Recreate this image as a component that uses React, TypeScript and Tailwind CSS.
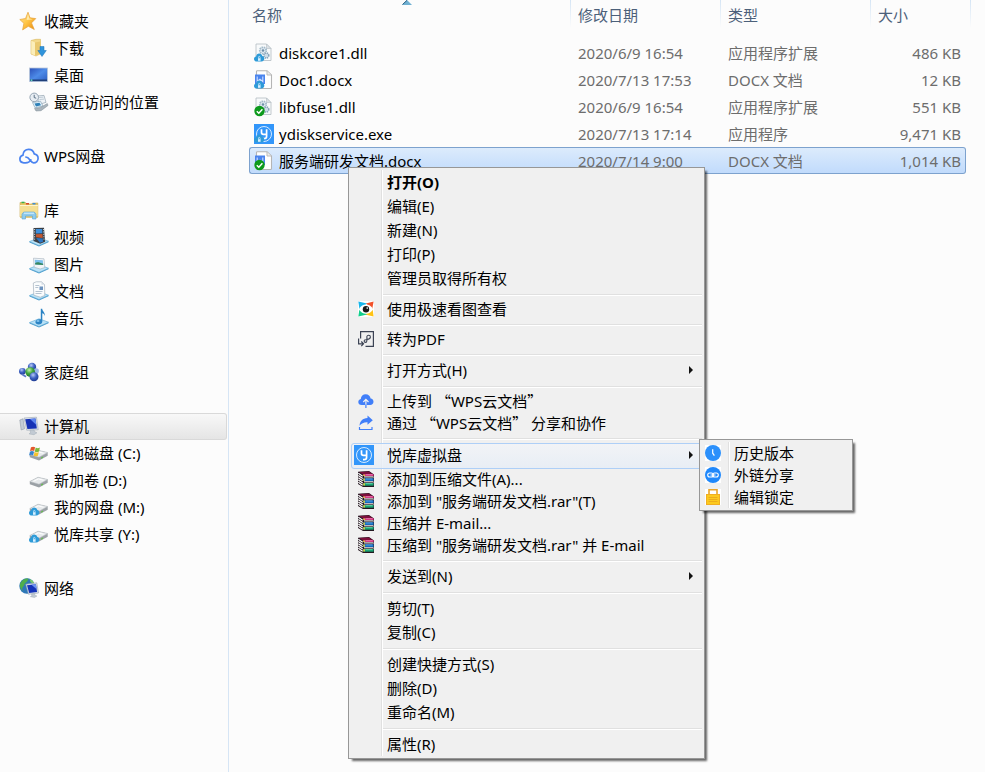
import type { ReactNode } from 'react';

type IconProps = { className?: string };

/* ---------- small overlay marks ---------- */

function CloudMark() {
  return (
    <g>
      <path d="M3 18.5C.9 18.5 0 17.2 0 15.9c0-1.4 1-2.3 2.1-2.5C2.3 11.500 3.600 10.500 5.200 10.500c1.700 0 2.800 1 3.100 2.500 1.200.2 2 1.200 2 2.600 0 1.700-1 2.900-2.800 2.900z" fill="#2e9bd8" />
      <path d="M4 15.200h2.600v2.600H4z" fill="#d8efff" />
      <path d="M4.500 15.200v-1a.8.8 0 0 1 1.600 0v1" stroke="#d8efff" strokeWidth=".7" fill="none" />
    </g>
  );
}

function CheckMark() {
  return (
    <g>
      <circle cx="5.500" cy="14" r="5.200" fill="#0d9a1c" />
      <path d="M2.800 14.200l2 2 3.600-3.900" stroke="#fff" strokeWidth="1.500" fill="none" />
    </g>
  );
}

/* ---------- sidebar icons ---------- */

function StarIcon() {
  return (
    <svg viewBox="0 0 20 20" className="size-5">
      <defs>
        <linearGradient id="star" x1="0" y1="0" x2="1" y2="1">
          <stop offset="0" stopColor="#ffe9a0" />
          <stop offset=".5" stopColor="#ffc545" />
          <stop offset="1" stopColor="#e8860c" />
        </linearGradient>
      </defs>
      <path d="M9 1.200l2 5.600 5.800.8-4.300 4.300 2.800 6.600-6-3.200-5.700 3.600 1.300-6.600L.8 8.500l5.700-1z" fill="url(#star)" stroke="#e6a23a" strokeWidth=".7" />
      <path d="M9 3l1.200 4.600 3.600.7-6.200.6z" fill="#fff3c4" opacity=".8" />
    </svg>
  );
}

function DownloadsIcon() {
  return (
    <svg viewBox="0 0 20 20" className="size-5">
      <path d="M2 2.500l5-1.200h4.500v14.500L7 18l-5-2z" fill="#f3d98b" stroke="#d9b75a" strokeWidth=".6" />
      <path d="M2.300 2.800L6 4.500v13L2.300 15.800z" fill="#fbeeb9" />
      <path d="M6 4.500l5.500-1V16L6 17.500z" fill="#e9c86e" />
      <path d="M11 8.500h4v4h2.300L13 18.500 8.800 12.500H11z" fill="#2f94dc" stroke="#1b72b5" strokeWidth=".5" />
    </svg>
  );
}

function DesktopIcon() {
  return (
    <svg viewBox="0 0 20 20" className="size-5">
      <defs>
        <linearGradient id="desk" x1="0" y1="0" x2="1" y2="1">
          <stop offset="0" stopColor="#2a4fb8" />
          <stop offset=".5" stopColor="#4d8be8" />
          <stop offset="1" stopColor="#2b5cc0" />
        </linearGradient>
      </defs>
      <rect x=".5" y="3" width="18" height="13.500" fill="url(#desk)" stroke="#b9c6d9" strokeWidth=".8" />
      <rect x="1" y="14.500" width="17" height="1.600" fill="#1f3f78" />
      <circle cx="2.500" cy="15.300" r="1" fill="#62d0c0" />
    </svg>
  );
}

function RecentIcon() {
  return (
    <svg viewBox="0 0 20 20" className="size-5">
      <path d="M8 4l7-.6 2 7-7 2z" fill="#eef3f7" stroke="#94a3b0" strokeWidth=".7" />
      <path d="M10 5.500l4.500-.4M10.500 7.500l4.500-.4" stroke="#a9b8c4" strokeWidth=".7" />
      <circle cx="5.200" cy="5.400" r="4.300" fill="#e7edf3" stroke="#8b9cab" strokeWidth=".9" />
      <path d="M5.200 2.800v2.800l2 .6" stroke="#4c6378" strokeWidth=".9" fill="none" />
      <path d="M3.500 10.500l8-1.300 2.500 4.800-8 1.800z" fill="#e2f2fb" stroke="#8ba5b7" strokeWidth=".7" />
      <path d="M5.500 11.500l5-.8 1.500 2.500-5 1.200z" fill="#2e80b7" />
      <path d="M5.500 16.500l6-1 6.800-4 .7 2-7 5.200-5 .3z" fill="#a9b4bc" stroke="#7d8b95" strokeWidth=".5" />
    </svg>
  );
}

function WpsCloudIcon() {
  return (
    <svg viewBox="0 0 20 20" className="size-5" fill="none" stroke="#4a83f0" strokeWidth="1.700" strokeLinecap="round">
      <path d="M11.800 13.800c-1 2-2.500 3-5.300 3H4.800C2.500 16.800.9 15.200.9 13c0-2 1.300-3.400 3.100-3.900C4 5.800 6.500 3.300 9.600 3.300c2.900 0 5 1.900 5.600 4.500 2.300.5 3.900 2.200 3.900 4.500 0 2.600-1.900 4.500-4.500 4.500-3.400 0-3.900-5.800-7.700-5.800" />
    </svg>
  );
}

function LibraryIcon() {
  return (
    <svg viewBox="0 0 20 20" className="size-5">
      <path d="M1 2.500h5.500l1 1.500h5l1-1h5.300V17H1z" fill="#e8c766" stroke="#c9a749" strokeWidth=".6" />
      <path d="M2.500 1.700h3v1.500h-3z" fill="#38b04a" />
      <path d="M7 3h3v1.500H7z" fill="#d9482b" />
      <path d="M13.500 3h3v1.500h-3z" fill="#3c8ddb" />
      <path d="M1 5h17.800v12.500H1z" fill="#f5df92" />
      <path d="M1 5.500h17.800" stroke="#fdf5cf" strokeWidth="1" />
      <path d="M1 17h17.800" stroke="#d3ae50" strokeWidth=".9" />
      <path d="M3 19v-5l1.800-2h10.400l1.800 2v5h-3.500v-3h-7v3z" fill="#8fcbed" stroke="#5aa5d3" strokeWidth=".6" />
      <path d="M5 13.200h10" stroke="#d9f1fd" strokeWidth="1" />
    </svg>
  );
}

// light blue tray that all library icons stand on
function Tray() {
  return (
    <g>
      <path d="M.5 14.500L10 10.800l9.500 3.400L10 18.500z" fill="#b9e2f7" stroke="#6ab1da" strokeWidth=".7" />
      <path d="M.5 14.500v1L10 19.500l9.500-4.300v-1L10 18.500z" fill="#4f9fce" />
    </g>
  );
}

function VideoIcon() {
  return (
    <svg viewBox="0 0 20 20" className="size-5">
      <Tray />
      <path d="M4.500 1L15 .8l1.200 14-5 2L4.500 14z" fill="#3a3f46" />
      <path d="M6.800 2h6.300l.3 4.200-6.500.4z" fill="#3e8fdc" />
      <path d="M6.900 7.200l6.500-.3.3 4-6.600-.6z" fill="#c4572f" />
      <path d="M7.200 11l6.600.5.2 3.200-3.200 1z" fill="#2b75c2" />
      <path d="M5.600 2v12M14.500 2l.6 12" stroke="#dfe5ea" strokeWidth=".9" strokeDasharray="1.100 1.300" />
    </svg>
  );
}

function PictureIcon() {
  return (
    <svg viewBox="0 0 20 20" className="size-5">
      <Tray />
      <path d="M4.500 4.200l10.500.6.800 8.700-4.600 1.500-6-1.800z" fill="#f2f5f8" stroke="#a1afba" strokeWidth=".6" />
      <path d="M5.800 5.700l8 .5.400 4.800-8-.4z" fill="#7cc0ee" />
      <path d="M6.100 9.200c2-1.800 4-1 8 .6l.1 1.200-8-.4z" fill="#37865e" />
    </svg>
  );
}

function DocumentsIcon() {
  return (
    <svg viewBox="0 0 20 20" className="size-5">
      <Tray />
      <path d="M4.300 2l3-1.200h5.200l3 2.700.3 11-4.500 1.700-6.500-2z" fill="#fafcfd" stroke="#a5b2bd" strokeWidth=".7" />
      <path d="M12.500.8v3l3-.3z" fill="#d3dce4" />
      <path d="M6.300 4.500h4M6.300 6.500h3M6.500 10.500h7M6.500 12.500h6" stroke="#a3b4c4" strokeWidth=".8" />
      <path d="M10.500 5.500h3.500v3.500h-3.500z" fill="#6d93bf" />
    </svg>
  );
}

function MusicIcon() {
  return (
    <svg viewBox="0 0 20 20" className="size-5">
      <Tray />
      <path d="M11.800.8h1.400c.3 2.700 3 3.600 2.700 7.200-.7-1.700-1.500-2.300-2.600-2.700v8.200c0 1.900-1.600 3-3.700 3-1.900 0-3.200-1-3.200-2.500 0-1.800 2.400-3.200 5.400-2.500z" fill="#2b83c4" />
      <ellipse cx="9" cy="13" rx="1.600" ry="1" fill="#7fc2ec" />
    </svg>
  );
}

function HomegroupIcon() {
  return (
    <svg viewBox="0 0 20 20" className="size-5">
      <defs>
        <radialGradient id="hgBlue" cx=".4" cy=".3" r=".8">
          <stop offset="0" stopColor="#b9cbf5" />
          <stop offset=".45" stopColor="#3f63c4" />
          <stop offset="1" stopColor="#152f85" />
        </radialGradient>
        <radialGradient id="hgGreen" cx=".4" cy=".3" r=".8">
          <stop offset="0" stopColor="#c6f0b0" />
          <stop offset=".45" stopColor="#43a83e" />
          <stop offset="1" stopColor="#146a1c" />
        </radialGradient>
      </defs>
      <circle cx="13" cy="5" r="4.200" fill="url(#hgBlue)" />
      <circle cx="17.200" cy="9" r="2.700" fill="#9db6e8" />
      <circle cx="3.400" cy="9.300" r="3.400" fill="url(#hgBlue)" />
      <path d="M3 12.300l4 2.500" stroke="#5b79c9" strokeWidth="1.800" />
      <circle cx="11.200" cy="10" r="4.800" fill="url(#hgGreen)" />
      <circle cx="15" cy="14.800" r="4.500" fill="url(#hgBlue)" />
    </svg>
  );
}

function ComputerIcon() {
  return (
    <svg viewBox="0 0 20 20" className="size-5">
      <path d="M.8 4L4 2.800l1.500 10L2.200 14z" fill="#c3ccd6" stroke="#8e9ba8" strokeWidth=".6" />
      <path d="M5 2l12.500-.8 1.700 12.600-11.500.4z" fill="#dfe5ec" stroke="#99a5b2" strokeWidth=".6" />
      <path d="M6.200 3.200L16.500 2.500l1.300 10-9.400.4z" fill="#1632b5" />
      <path d="M11 2.900l5.500-.4.9 6.500z" fill="#5e86f0" />
      <path d="M11 14.200l4-.2 1 2 2 .8-3 1.900-5-.8 1.500-1.400z" fill="#c2cad3" stroke="#97a3af" strokeWidth=".4" />
    </svg>
  );
}

function DriveBody() {
  return (
    <g>
      <path d="M.8 11.500L9 7.200l9.700 2.300v3.300L10 17.500.8 14.200z" fill="#9ba1a6" />
      <path d="M.8 11.500L9 7.200l9.700 2.300L10 14.200z" fill="#e7eaec" stroke="#b3b8bc" strokeWidth=".5" />
      <path d="M4.500 11.300L9.300 8.900l5.200 1.300" stroke="#fff" strokeWidth="1" fill="none" />
      <path d="M12.300 14.300l1.500-.8v1.400l-1.500.8z" fill="#5ac33c" />
    </g>
  );
}

function SystemDriveIcon() {
  return (
    <svg viewBox="0 0 20 20" className="size-5">
      <DriveBody />
      <path d="M2 4.300c1.500-.9 2.800-.8 4.100 0l-.9 3.800c-1.400-.8-2.700-.8-4.200 0z" fill="#e2572b" />
      <path d="M6.700 4.600c1.400.8 2.800.8 4.200 0L10 8.400c-1.500.8-2.800.8-4.200 0z" fill="#7cb83b" />
      <path d="M.9 8.700c1.500-.8 2.700-.8 4.100 0l-.9 3.700c-1.400-.8-2.600-.8-4 0z" fill="#3584cf" />
      <path d="M5.600 9c1.400.8 2.700.8 4.200 0l-.9 3.700c-1.500.8-2.800.8-4.200 0z" fill="#f5c22d" />
    </svg>
  );
}

function DriveIcon() {
  return (
    <svg viewBox="0 0 20 20" className="size-5">
      <DriveBody />
    </svg>
  );
}

function CloudDriveIcon() {
  return (
    <svg viewBox="0 0 20 20" className="size-5">
      <DriveBody />
      <CloudMark />
    </svg>
  );
}

function NetworkIcon() {
  return (
    <svg viewBox="0 0 20 20" className="size-5">
      <circle cx="8" cy="8" r="7.700" fill="#2f78b8" />
      <path d="M1 6C2.500 2 6 0 9.500.6c-1 1.700-.5 2.700-2.500 3.900-2 1-1.500 3-3 4.500-1 1-1.500 2.500.5 4C2 12 .4 9 1 6z" fill="#4fae4c" />
      <path d="M10.500 1c2.500.7 4.200 2.500 4.700 4.500l-3.500-1z" fill="#7bcb6c" />
      <path d="M6.800 6.200l11-1.400 1.700 10.200-10 1.300z" fill="#dce3ea" stroke="#96a3b0" strokeWidth=".6" />
      <path d="M8 7.300l8.900-1.100 1.200 7.800-7.900 1z" fill="#1534ba" />
      <path d="M12.500 6.700l4.400-.5.800 5z" fill="#6c92f2" />
      <path d="M12.500 16l3-.4.8 1.800 1.700.6-2.500 1.500-4.200-.8 1.500-1z" fill="#c0c9d2" stroke="#97a3af" strokeWidth=".4" />
    </svg>
  );
}

/* ---------- file icons ---------- */

function DllIcon({ mark }: { mark: ReactNode }) {
  return (
    <svg viewBox="0 0 20 20" className="size-5 shrink-0">
      <path d="M2 1h10.500L17 5.500V17.500H2z" fill="#f8fafb" stroke="#b4bcc3" strokeWidth=".8" />
      <path d="M12.500 1v4.500H17z" fill="#dbe1e6" stroke="#b4bcc3" strokeWidth=".6" />
      <circle cx="9" cy="7.500" r="3.200" fill="#e4edf4" stroke="#a3bac9" strokeWidth="1.800" strokeDasharray="1.500 .7" />
      <circle cx="9" cy="7.500" r="1.300" fill="#6f8fa8" />
      <circle cx="12.300" cy="12.500" r="2.500" fill="#cddde9" stroke="#86a3b8" strokeWidth="1.500" strokeDasharray="1.300 .7" />
      {mark}
    </svg>
  );
}

function DocxIcon({ mark }: { mark: ReactNode }) {
  return (
    <svg viewBox="0 0 20 20" className="size-5 shrink-0">
      <path d="M3 .8h10L17.500 5v12.500a1 1 0 0 1-1 1H3.500a1 1 0 0 1-1-1V1.500z" fill="#fff" stroke="#b5b5b5" strokeWidth="1.100" />
      <path d="M13 1v4h4.300" fill="#eee" stroke="#b5b5b5" strokeWidth=".9" />
      <rect x="1" y="4.500" width="10" height="9.500" fill="#4a84ee" />
      <path d="M3.200 6.500v5L6 9.300l2.800 2.200v-5" stroke="#cfe0ff" strokeWidth="1.100" fill="none" />
      {mark}
    </svg>
  );
}

function YIcon({ mark, className = 'size-5' }: IconProps & { mark?: ReactNode }) {
  return (
    <svg viewBox="0 0 20 20" className={`${className} shrink-0`}>
      <rect width="20" height="20" fill="#3296fa" />
      <circle cx="10" cy="10" r="7.500" fill="none" stroke="#d5eaff" strokeWidth="1" />
      <path d="M7.500 5.300v3.200c0 1.200.8 1.900 2 1.900h2.800M12.600 5.300v7c0 1.500-.9 2.400-2.600 2.400H9" fill="none" stroke="#fff" strokeWidth="1.700" />
      {mark}
    </svg>
  );
}

/* ---------- menu icons ---------- */

function ViewerIcon() {
  return (
    <svg viewBox="0 0 16 16" className="size-4">
      <rect width="16" height="16" rx="1" fill="#fff" />
      <path d="M.4.400L9 2.500 1.500 9z" fill="#19b5ea" />
      <path d="M8 2.500L15.600.4 14 9z" fill="#f2512a" />
      <path d="M14.500 7l1.100 8.600L7 13.500z" fill="#ffc314" />
      <path d="M1.500 7L.4 15.600 9 13.500z" fill="#12cf8c" />
      <path d="M.8 8.200c2-3.300 4.500-4.700 7.200-4.700s5.200 1.400 7.200 4.700c-2 3.300-4.500 4.600-7.200 4.600S2.800 11.500.8 8.200z" fill="#fff" />
      <circle cx="8" cy="8.200" r="3.200" fill="#1a1a1a" />
      <circle cx="9.200" cy="7.100" r=".8" fill="#fff" />
    </svg>
  );
}

function PdfIcon() {
  return (
    <svg viewBox="0 0 16 16" className="size-4" fill="none" stroke="#3c4354" strokeWidth="1.200">
      <path d="M2.600 7.500V.6h12.800v14.800H7.500" />
      <path d="M.6 7.500v5.300h4.800M3.300 10.500l2.200 2.300-2.200 2.400" />
      <path d="M7.500 8.700c-1.800 0-1.800 2.700 0 2.700 1.200 0 1.400-1 1.400-2V5.600c0-1.800 3.500-1.800 3.500.3 0 1.800-1.600 2.300-3.500 2.600z" strokeWidth="1.100" />
    </svg>
  );
}

function UploadIcon() {
  return (
    <svg viewBox="0 0 16 16" className="size-4">
      <path d="M3.700 12C1.500 12 .3 10.700.3 9c0-1.500 1-2.700 2.500-3C3 3.200 5 1.200 7.700 1.200S12.200 3 12.600 5.500c1.800.2 2.900 1.500 2.900 3.200 0 1.900-1.300 3.300-3.300 3.300z" fill="#417ff9" />
      <path d="M7.900 12V6.500M5.300 9l2.600-2.600L10.500 9" fill="none" stroke="#f0f0f0" strokeWidth="1.200" />
      <path d="M7.900 15V11.500" stroke="#417ff9" strokeWidth="1.200" />
    </svg>
  );
}

function ShareIcon() {
  return (
    <svg viewBox="0 0 16 16" className="size-4">
      <path d="M9.500.5l5.300 4.800-5.300 4.500V7.200C6 7 3.500 8.300 1.500 10.700 2 6 4.500 3.300 9.500 3z" fill="#417ff9" />
      <path d="M1.500 12v2.500h12.500V12" fill="none" stroke="#417ff9" strokeWidth="1.200" />
    </svg>
  );
}

function RarIcon() {
  return (
    <svg viewBox="0 0 16 16" className="size-4">
      {/* three stacked books, page edges on the left */}
      <path d="M0 .8L11 0l5 3.500V5l-.7 1 .7 1.500V10l-.7 1 .7 1.500V16H5L0 13z" fill="#241820" />
      <path d="M1 1l9.800-.6 4.200 2.800-9.500.6z" fill="#7d0f3c" />
      <path d="M5.300 3.300L15.600 3v2H5.300z" fill="#d02f7c" />
      <path d="M5.300 7.300h10.300v2.600H5.300z" fill="#1471c9" />
      <path d="M5.300 12h10.300v2.700H5.300z" fill="#17a071" />
      <path d="M6 5.900h9M6 10.800h9" stroke="#fff" strokeWidth="1" />
      <path d="M7.500 3.700h7" stroke="#f596c6" strokeWidth=".7" />
      <path d="M7.500 7.900h7" stroke="#7dc0f5" strokeWidth=".7" />
      <path d="M7.500 12.600h7" stroke="#7de6b8" strokeWidth=".7" />
      <path d="M.3 2.300l4.400 3M.3 4.500l4.400 3M.3 6.800l4.400 3M.3 9l4.400 3M.3 11.300l4.400 3" stroke="#fff" strokeWidth="1.100" />
      <path d="M5.300 3.400h1.600V5H5.300zM5.300 7.500h1.600v2.200H5.300zM5.300 12.300h1.600v2.200H5.300z" fill="#e2d23c" />
    </svg>
  );
}

function HistoryIcon() {
  return (
    <svg viewBox="0 0 16 16" className="size-4">
      <rect width="16" height="16" fill="#fff" />
      <circle cx="8" cy="8" r="8" fill="#2b90fb" />
      <path d="M7.700 4.200v4l1.700 2.500" fill="none" stroke="#fff" strokeWidth="1.200" />
    </svg>
  );
}

function LinkIcon() {
  return (
    <svg viewBox="0 0 16 16" className="size-4">
      <rect width="16" height="16" fill="#fff" />
      <circle cx="8" cy="8" r="8" fill="#1f88fb" />
      <rect x="2.700" y="6" width="5.600" height="4" rx="2" fill="none" stroke="#fff" strokeWidth="1.100" />
      <rect x="7.700" y="6" width="5.600" height="4" rx="2" fill="none" stroke="#fff" strokeWidth="1.100" />
      <path d="M5.500 8h5" stroke="#fff" strokeWidth="1" />
    </svg>
  );
}

function LockIcon() {
  return (
    <svg viewBox="0 0 16 16" className="size-4">
      <rect width="16" height="16" fill="#fff" />
      <path d="M4 6V.8h8V6" fill="none" stroke="#eaa62a" strokeWidth="1.600" />
      <rect x="1" y="5.500" width="14" height="10.500" fill="#fcca1e" />
      <path d="M1 5.500h14M1.500 5.500V16M14.500 5.500V16M1 15.500h14" stroke="#f0ae22" strokeWidth="1" />
      <path d="M3.500 8.500h9M3.500 10.500h9M3.500 12.500h9" stroke="#e8a51c" strokeWidth=".8" />
    </svg>
  );
}

/* ---------- data ---------- */

interface NavItem {
  label: string;
  icon: ReactNode;
  active?: boolean;
}

const navGroups: { root: NavItem; items: NavItem[] }[] = [
  {
    root: { label: '收藏夹', icon: <StarIcon /> },
    items: [
      { label: '下载', icon: <DownloadsIcon /> },
      { label: '桌面', icon: <DesktopIcon /> },
      { label: '最近访问的位置', icon: <RecentIcon /> },
    ],
  },
  { root: { label: 'WPS网盘', icon: <WpsCloudIcon /> }, items: [] },
  {
    root: { label: '库', icon: <LibraryIcon /> },
    items: [
      { label: '视频', icon: <VideoIcon /> },
      { label: '图片', icon: <PictureIcon /> },
      { label: '文档', icon: <DocumentsIcon /> },
      { label: '音乐', icon: <MusicIcon /> },
    ],
  },
  { root: { label: '家庭组', icon: <HomegroupIcon /> }, items: [] },
  {
    root: { label: '计算机', icon: <ComputerIcon />, active: true },
    items: [
      { label: '本地磁盘 (C:)', icon: <SystemDriveIcon /> },
      { label: '新加卷 (D:)', icon: <DriveIcon /> },
      { label: '我的网盘 (M:)', icon: <CloudDriveIcon /> },
      { label: '悦库共享 (Y:)', icon: <CloudDriveIcon /> },
    ],
  },
  { root: { label: '网络', icon: <NetworkIcon /> }, items: [] },
];

const files = [
  { name: 'diskcore1.dll', date: '2020/6/9 16:54', type: '应用程序扩展', size: '486 KB', icon: <DllIcon mark={<CloudMark />} /> },
  { name: 'Doc1.docx', date: '2020/7/13 17:53', type: 'DOCX 文档', size: '12 KB', icon: <DocxIcon mark={<CloudMark />} /> },
  { name: 'libfuse1.dll', date: '2020/6/9 16:54', type: '应用程序扩展', size: '551 KB', icon: <DllIcon mark={<CheckMark />} /> },
  { name: 'ydiskservice.exe', date: '2020/7/13 17:14', type: '应用程序', size: '9,471 KB', icon: <YIcon mark={<CloudMark />} /> },
  { name: '服务端研发文档.docx', date: '2020/7/14 9:00', type: 'DOCX 文档', size: '1,014 KB', icon: <DocxIcon mark={<CheckMark />} />, selected: true },
];

/* ---------- sidebar ---------- */

function NavLink({ item, child }: { item: NavItem; child?: boolean }) {
  return (
    <a
      href="#"
      className={`flex h-[27px] items-center gap-[5px] rounded-r-[3px] border border-l-0 pb-[2px] ${child ? 'pl-[29px]' : 'pl-[19px]'} ${
        item.active ? 'border-[#d9d9d9] bg-linear-to-b from-[#f8f8f8] to-[#e5e5e5]' : 'border-transparent'
      }`}
    >
      {item.icon}
      <span>{item.label}</span>
    </a>
  );
}

function Sidebar() {
  return (
    <nav className="flex w-[229px] shrink-0 flex-col gap-[27px] border-r border-[#d6e5f5] pt-2 pr-px">
      {navGroups.map((group) => (
        <div key={group.root.label}>
          <NavLink item={group.root} />
          {group.items.map((item) => (
            <NavLink key={item.label} item={item} child />
          ))}
        </div>
      ))}
    </nav>
  );
}

/* ---------- file list ---------- */

function HeaderCell({ children, className = '' }: { children?: ReactNode; className?: string }) {
  return (
    <th className={`relative h-[39px] p-0 pb-[10px] text-left font-normal ${className}`}>
      {children}
      <span className="absolute top-0 -right-px h-7 w-px bg-linear-to-b from-[#d5e5f5] to-[#fcfcfc]" />
    </th>
  );
}

function FileTable() {
  return (
    <table className="w-full table-fixed border-separate border-spacing-0">
      <colgroup>
        <col />
        <col className="w-[150px]" />
        <col className="w-[150px]" />
        <col className="w-[96px]" />
        <col className="w-[5px]" />
      </colgroup>
      <thead className="text-[#4c607a]">
        <tr>
          <HeaderCell className="pl-[3px]">
            名称
            <svg viewBox="0 0 10 5" className="absolute top-0 left-[153px] h-[5px] w-[10px]">
              <path d="M0 5L5 0l5 5z" fill="#6fb0d2" />
              <path d="M.5 4.500L5 .3" stroke="#2c5f80" strokeWidth="1" />
            </svg>
          </HeaderCell>
          <HeaderCell className="pl-2">修改日期</HeaderCell>
          <HeaderCell className="pl-2">类型</HeaderCell>
          <th className="h-[39px] p-0 pb-[10px] pl-2 text-left font-normal">大小</th>
          <td className="relative h-[39px] p-0">
            <span className="absolute top-0 right-0 h-7 w-px bg-linear-to-b from-[#d5e5f5] to-[#fcfcfc]" />
          </td>
        </tr>
      </thead>
      <tbody className="text-[#6d6d6d]">
        {files.map((file) => {
          const cell = file.selected
            ? 'h-[27px] border-y border-[#7da2ce] bg-linear-to-b from-[#dcebfc] to-[#c1dbfc] p-0'
            : 'h-[27px] border-y border-transparent p-0';
          return (
            <tr key={file.name}>
              <td className={`${cell} rounded-l-[3px] border-l pl-1`}>
                <span className="flex items-center gap-[5px] text-black">
                  {file.icon}
                  {file.name}
                </span>
              </td>
              <td className={`${cell} pl-2`}>{file.date}</td>
              <td className={`${cell} pl-2`}>{file.type}</td>
              <td className={`${cell} rounded-r-[3px] border-r pr-1 text-right`}>{file.size}</td>
            </tr>
          );
        })}
      </tbody>
    </table>
  );
}

/* ---------- context menu ---------- */

// full-width quotation marks
function Quoted({ children }: { children: ReactNode }) {
  return (
    <>
      <span className="font-['Noto_Sans_CJK_SC',sans-serif]">“</span>
      {children}
      <span className="font-['Noto_Sans_CJK_SC',sans-serif]">”</span>
    </>
  );
}

interface MenuItemProps {
  icon?: ReactNode;
  children: ReactNode;
  bold?: boolean;
  compact?: boolean;
  arrow?: boolean;
  active?: boolean;
  submenu?: ReactNode;
}

function MenuItem({ icon, children, bold, compact, arrow, active, submenu }: MenuItemProps) {
  const height = active ? 'h-[26px]' : compact ? 'h-[22px]' : 'h-6';
  return (
    <li role="none" className="relative">
      <button
        type="button"
        role="menuitem"
        className={`flex w-full items-center rounded-[3px] border pr-2 pb-[2px] text-left whitespace-nowrap ${height} ${
          bold ? 'font-bold' : ''
        } ${active ? 'border-[#aecff7] bg-linear-to-b from-[#f2f4f8]/80 to-[#e6edf6]/80' : 'border-transparent'}`}
      >
        <span className="flex w-[22px] shrink-0 justify-end">{icon}</span>
        <span className="ml-[13px] flex-1">{children}</span>
        {arrow && (
          <svg viewBox="0 0 4 8" className="h-2 w-1">
            <path d="M0 0l4 4-4 4z" fill="#111" />
          </svg>
        )}
      </button>
      {submenu}
    </li>
  );
}

function Separator() {
  return (
    <li role="separator" className="flex h-2 items-center pl-8">
      <span className="h-[2px] flex-1 border-t border-[#e0e0e0] bg-white" />
    </li>
  );
}

function Menu({ children, className }: { children: ReactNode; className: string }) {
  return (
    <ul
      role="menu"
      className={`absolute border border-[#979797] bg-[#f0f0f0] px-[2px] text-black shadow-[3px_3px_2px_-1px_rgba(0,0,0,0.6)] ${className}`}
    >
      {children}
    </ul>
  );
}

function GutterLine({ className }: { className: string }) {
  return <li role="none" className={`absolute inset-y-[2px] w-[2px] border-l border-[#e0e0e0] bg-white ${className}`} />;
}

function SubMenuItem({ icon, children }: { icon: ReactNode; children: ReactNode }) {
  return (
    <li role="none" className="relative">
      <button type="button" role="menuitem" className="flex h-[22px] w-full items-center gap-[13px] pl-[3px] text-left whitespace-nowrap">
        {icon}
        {children}
      </button>
    </li>
  );
}

function DiskSubMenu() {
  return (
    <Menu className="top-[-4px] left-[348px] z-10 w-[154px] py-[2px]">
      <GutterLine className="left-[28px]" />
      <SubMenuItem icon={<HistoryIcon />}>历史版本</SubMenuItem>
      <SubMenuItem icon={<LinkIcon />}>外链分享</SubMenuItem>
      <SubMenuItem icon={<LockIcon />}>编辑锁定</SubMenuItem>
    </Menu>
  );
}

function ContextMenu() {
  return (
    <Menu className="top-[167px] left-[348px] w-[357px] pt-[3px] pb-px">
      <GutterLine className="left-8" />
      <MenuItem bold>打开(O)</MenuItem>
      <MenuItem>编辑(E)</MenuItem>
      <MenuItem>新建(N)</MenuItem>
      <MenuItem>打印(P)</MenuItem>
      <MenuItem>管理员取得所有权</MenuItem>
      <Separator />
      <MenuItem compact icon={<ViewerIcon />}>使用极速看图查看</MenuItem>
      <Separator />
      <MenuItem compact icon={<PdfIcon />}>转为PDF</MenuItem>
      <Separator />
      <MenuItem arrow>打开方式(H)</MenuItem>
      <Separator />
      <MenuItem compact icon={<UploadIcon />}>
        上传到 <Quoted>WPS云文档</Quoted>
      </MenuItem>
      <MenuItem compact icon={<ShareIcon />}>
        通过 <Quoted>WPS云文档</Quoted> 分享和协作
      </MenuItem>
      <Separator />
      <MenuItem active arrow icon={<YIcon />} submenu={<DiskSubMenu />}>
        悦库虚拟盘
      </MenuItem>
      <MenuItem compact icon={<RarIcon />}>添加到压缩文件(A)...</MenuItem>
      <MenuItem compact icon={<RarIcon />}>添加到 "服务端研发文档.rar"(T)</MenuItem>
      <MenuItem compact icon={<RarIcon />}>压缩并 E-mail...</MenuItem>
      <MenuItem compact icon={<RarIcon />}>压缩到 "服务端研发文档.rar" 并 E-mail</MenuItem>
      <Separator />
      <MenuItem arrow>发送到(N)</MenuItem>
      <Separator />
      <MenuItem>剪切(T)</MenuItem>
      <MenuItem>复制(C)</MenuItem>
      <Separator />
      <MenuItem>创建快捷方式(S)</MenuItem>
      <MenuItem>删除(D)</MenuItem>
      <MenuItem>重命名(M)</MenuItem>
      <Separator />
      <MenuItem>属性(R)</MenuItem>
    </Menu>
  );
}

export default function App() {
  return (
    <div className="relative flex min-h-screen bg-[#fcfcfc] font-['Noto_Sans','Noto_Sans_CJK_SC',sans-serif] text-[15px] leading-5 text-black">
      <Sidebar />
      <main className="min-w-0 flex-1 pr-[14px] pl-5">
        <FileTable />
      </main>
      <ContextMenu />
    </div>
  );
}
